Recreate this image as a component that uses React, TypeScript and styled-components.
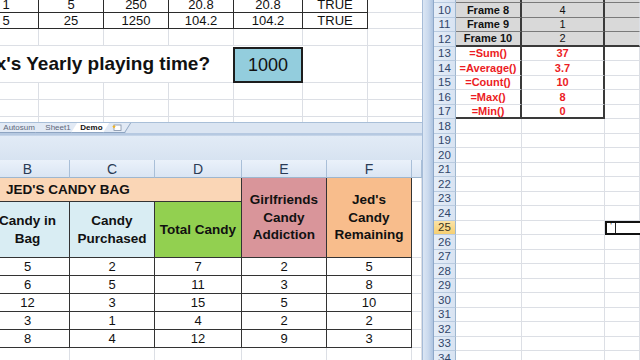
import React from 'react';
import styled, { createGlobalStyle } from 'styled-components';

const GlobalStyle = createGlobalStyle`
  html, body { margin: 0; padding: 0; background: #c6d7ed; }
  body { font-family: "Liberation Sans", Arial, sans-serif; overflow: hidden; }
  * { box-sizing: border-box; }
`;

const Screen = styled.div`
  width: 640px;
  height: 360px;
  display: flex;
  overflow: hidden;
  background: #c6d7ed;
`;

const LeftPane = styled.div`
  width: 422px;
  flex: none;
  display: flex;
  flex-direction: column;
  overflow: hidden;
`;

/* ---------- top left window ---------- */

const TopSheet = styled.div`
  height: 122px;
  flex: none;
  overflow: hidden;
  background: #fff;
`;

const TopGrid = styled.div`
  display: grid;
  grid-template-columns: 65px 65px 65px 65px 69px 65px 65px;
  grid-template-rows: 17px 16px 17px 37px 17px 17px 17px;
  margin: -4px 0 0 -26px;
  font-size: 13px;
  color: #111;
`;

const TopCell = styled.div<{ $data?: boolean }>`
  display: flex;
  align-items: center;
  justify-content: center;
  border-right: 1px solid ${p => (p.$data ? '#2b2b2b' : '#dcdfe5')};
  border-bottom: 1px solid ${p => (p.$data ? '#2b2b2b' : '#dcdfe5')};
`;

const Question = styled.div`
  grid-column: span 4;
  display: flex;
  align-items: center;
  justify-content: flex-end;
  padding-right: 24px;
  font-size: 19px;
  font-weight: 700;
  white-space: nowrap;
  border-bottom: 1px solid #dcdfe5;
`;

const AnswerBox = styled.div`
  display: flex;
  align-items: center;
  justify-content: center;
  margin: 1px 0 0 -1px;
  background: #93cddd;
  border: 2px solid #1d1d1d;
  font-size: 18px;
`;

const TabBar = styled.div`
  height: 13px;
  flex: none;
  display: flex;
  align-items: stretch;
  background: #dbe5f2;
  border-top: 1px solid #a9bfd8;
  border-bottom: 2px solid #b6c9e1;
  padding-left: 0;
  font-size: 8px;
`;

const Tab = styled.div<{ $active?: boolean; $w: number }>`
  width: ${p => p.$w}px;
  display: flex;
  align-items: center;
  justify-content: center;
  margin-left: -4px;
  transform: skewX(-32deg);
  background: ${p => (p.$active ? '#ffffff' : '#e2eaf5')};
  border-right: 1px solid #8ea5c2;
  border-bottom: 1px solid #8ea5c2;
  color: ${p => (p.$active ? '#111' : '#5d6879')};
  font-weight: ${p => (p.$active ? 700 : 400)};
`;

const TabLabel = styled.span`
  transform: skewX(32deg);
  white-space: nowrap;
`;

/* ---------- bottom left window ---------- */

const BottomWindow = styled.div`
  flex: 1;
  display: flex;
  flex-direction: column;
  overflow: hidden;
  background: #fff;
`;

const WindowChrome = styled.div`
  height: 25px;
  flex: none;
  background: linear-gradient(#e2ebf6, #d7e3f1);
  border-top: 1px solid #c4d4e8;
`;

const CandyGrid = styled.div`
  display: grid;
  grid-template-columns: 84px 85px 87px 85px 85px 1fr;
  grid-template-rows: 18px 24px 56px repeat(5, 18px) repeat(2, 18px);
  margin-left: -14px;
  font-size: 13px;
  color: #111;
`;

const ColHead = styled.div`
  display: flex;
  align-items: center;
  justify-content: center;
  background: linear-gradient(#eaf1fa, #dae5f3);
  border-right: 1px solid #a9bfd8;
  border-bottom: 1px solid #9eb6ce;
  color: #2a3b55;
  font-size: 14px;
`;

const HeadCell = styled.div<{ $bg: string; $span?: number; $rows?: number; $left?: boolean }>`
  grid-column: span ${p => p.$span ?? 1};
  grid-row: span ${p => p.$rows ?? 1};
  display: flex;
  align-items: center;
  justify-content: ${p => (p.$left ? 'flex-start' : 'center')};
  padding-left: ${p => (p.$left ? '20px' : '0')};
  text-align: center;
  background: ${p => p.$bg};
  border-right: 1px solid #333;
  border-bottom: 1px solid #333;
  font-size: 13.5px;
  font-weight: 700;
  line-height: 17.5px;
`;

const DataCell = styled.div<{ $plain?: boolean }>`
  display: flex;
  align-items: center;
  justify-content: center;
  border-right: 1px solid ${p => (p.$plain ? '#dcdfe5' : '#333')};
  border-bottom: 1px solid ${p => (p.$plain ? '#dcdfe5' : '#333')};
`;

/* ---------- splitter + right window ---------- */

const Splitter = styled.div`
  width: 12px;
  flex: none;
  background: linear-gradient(90deg, #dbe6f4 0, #cbdaee 50%, #aec4e0 100%);
  border-left: 1px solid #a6bcd8;
  border-right: 1px solid #8ea8c9;
`;

const RightWindow = styled.div`
  flex: 1;
  overflow: hidden;
  background: #fff;
`;

const RightGrid = styled.div`
  display: grid;
  grid-template-columns: 22px 66px 83px 1fr;
  grid-auto-rows: 14.5px;
  margin-top: -11.5px;
  font-size: 11px;
  color: #111;
`;

const RowHead = styled.div<{ $active?: boolean }>`
  display: flex;
  align-items: center;
  justify-content: center;
  background: ${p => (p.$active ? 'linear-gradient(#fbe3a6, #f6cf72)' : 'linear-gradient(90deg, #e6eef8, #d8e3f2)')};
  border-right: 1px solid #9eb6ce;
  border-bottom: 1px solid #b9cbe0;
  color: ${p => (p.$active ? '#3a3320' : '#30466a')};
  font-size: 11.5px;
`;

type Kind = 'frame' | 'calc' | 'plain';

const RCell = styled.div<{ $kind: Kind; $strongRight?: boolean; $strongBottom?: boolean; $bold?: boolean }>`
  display: flex;
  align-items: center;
  justify-content: center;
  background: ${p => (p.$kind === 'frame' ? '#d9d9d9' : '#fff')};
  color: ${p => (p.$kind === 'calc' ? '#ec1c24' : '#111')};
  font-weight: ${p => (p.$bold || p.$kind === 'calc' ? 700 : 400)};
  border-right: ${p => (p.$strongRight ? '2px solid #3a3a3a' : '1px solid #dcdfe5')};
  border-bottom: ${p =>
    p.$strongBottom ? '2px solid #3a3a3a' : p.$kind === 'frame' ? '1px solid #7a7a7a' : '1px solid #dcdfe5'};
  white-space: nowrap;
`;

const ActiveCell = styled.div`
  display: flex;
  align-items: stretch;
  border: 2px solid #111;
  border-right: none;
`;

const EditMark = styled.span`
  width: 9px;
  border-right: 1px solid #222;
  font-size: 8px;
  line-height: 6px;
  text-align: center;
`;

const NewSheetIcon = () => (
  <svg width="11" height="8" viewBox="0 0 11 8">
    <rect x="3" y="2" width="7" height="5.5" fill="#fff" stroke="#7f8fa6" strokeWidth="0.8" />
    <path d="M3 1.5 L3.6 3 L5 3.2 L3.8 4 L4.2 5.5 L3 4.6 L1.8 5.5 L2.2 4 L1 3.2 L2.4 3 Z" fill="#f2b320" />
  </svg>
);

const topRows = [
  ['1', '5', '250', '20.8', '20.8', 'TRUE'],
  ['5', '25', '1250', '104.2', '104.2', 'TRUE'],
];

const candy = [
  [5, 2, 7, 2, 5],
  [6, 5, 11, 3, 8],
  [12, 3, 15, 5, 10],
  [3, 1, 4, 2, 2],
  [8, 4, 12, 9, 3],
];

const frames: Record<number, [string, string]> = {
  9: ['', ''],
  10: ['Frame 8', '4'],
  11: ['Frame 9', '1'],
  12: ['Frame 10', '2'],
};

const calcs: Record<number, [string, string]> = {
  13: ['=Sum()', '37'],
  14: ['=Average()', '3.7'],
  15: ['=Count()', '10'],
  16: ['=Max()', '8'],
  17: ['=Min()', '0'],
};

const rightRows = Array.from({ length: 26 }, (_, i) => i + 9);

const App = () => {
  return (
    <Screen>
      <GlobalStyle />
      <LeftPane>
        <TopSheet>
          <TopGrid>
            {topRows.map((r, i) => (
              <React.Fragment key={i}>
                {r.map((v, j) => (
                  <TopCell $data key={j}>{v}</TopCell>
                ))}
                <TopCell />
              </React.Fragment>
            ))}
            {Array.from({ length: 7 }, (_, j) => <TopCell key={'e' + j} />)}
            <Question>Max's Yearly playing time?</Question>
            <AnswerBox>1000</AnswerBox>
            <TopCell />
            <TopCell />
            {Array.from({ length: 21 }, (_, j) => <TopCell key={'f' + j} />)}
          </TopGrid>
        </TopSheet>
        <TabBar>
          <Tab $w={46}><TabLabel>Autosum</TabLabel></Tab>
          <Tab $w={40}><TabLabel>Sheet1</TabLabel></Tab>
          <Tab $w={36} $active><TabLabel>Demo</TabLabel></Tab>
          <Tab $w={22}><TabLabel><NewSheetIcon /></TabLabel></Tab>
        </TabBar>

        <BottomWindow>
          <WindowChrome />
          <CandyGrid>
            {['B', 'C', 'D', 'E', 'F', ''].map(c => (
              <ColHead key={c}>{c}</ColHead>
            ))}
            <HeadCell $bg="#fad6b6" $span={3} $left>JED'S CANDY BAG</HeadCell>
            <HeadCell $bg="#d9959a" $rows={2}>Girlfriends<br />Candy<br />Addiction</HeadCell>
            <HeadCell $bg="#f8bd8c" $rows={2}>Jed's<br />Candy<br />Remaining</HeadCell>
            <DataCell $plain />
            <HeadCell $bg="#d9edf3">Candy in<br />Bag</HeadCell>
            <HeadCell $bg="#d9edf3">Candy<br />Purchased</HeadCell>
            <HeadCell $bg="#92d050">Total Candy</HeadCell>
            <DataCell $plain />
            {candy.map((r, i) => (
              <React.Fragment key={i}>
                {r.map((v, j) => (
                  <DataCell key={j}>{v}</DataCell>
                ))}
                <DataCell $plain />
              </React.Fragment>
            ))}
            {Array.from({ length: 12 }, (_, j) => <DataCell $plain key={'b' + j} />)}
          </CandyGrid>
        </BottomWindow>
      </LeftPane>

      <Splitter />

      <RightWindow>
        <RightGrid>
          {rightRows.map(n => {
            const f = frames[n];
            const c = calcs[n];
            const kind: Kind = f ? 'frame' : c ? 'calc' : 'plain';
            const cells = f ?? c ?? ['', ''];
            const strong = !!(f || c);
            const strongBottom = n === 12 || n === 17;
            return (
              <React.Fragment key={n}>
                <RowHead $active={n === 25}>{n}</RowHead>
                <RCell $kind={kind} $bold={!!f} $strongRight={strong} $strongBottom={strongBottom}>{cells[0]}</RCell>
                <RCell $kind={kind} $strongRight={strong} $strongBottom={strongBottom}>{cells[1]}</RCell>
                {n === 25 ? (
                  <ActiveCell>
                    <EditMark>'</EditMark>
                  </ActiveCell>
                ) : (
                  <RCell $kind={f ? 'frame' : 'plain'} $strongBottom={n === 12}></RCell>
                )}
              </React.Fragment>
            );
          })}
        </RightGrid>
      </RightWindow>
    </Screen>
  );
};

export default App;
